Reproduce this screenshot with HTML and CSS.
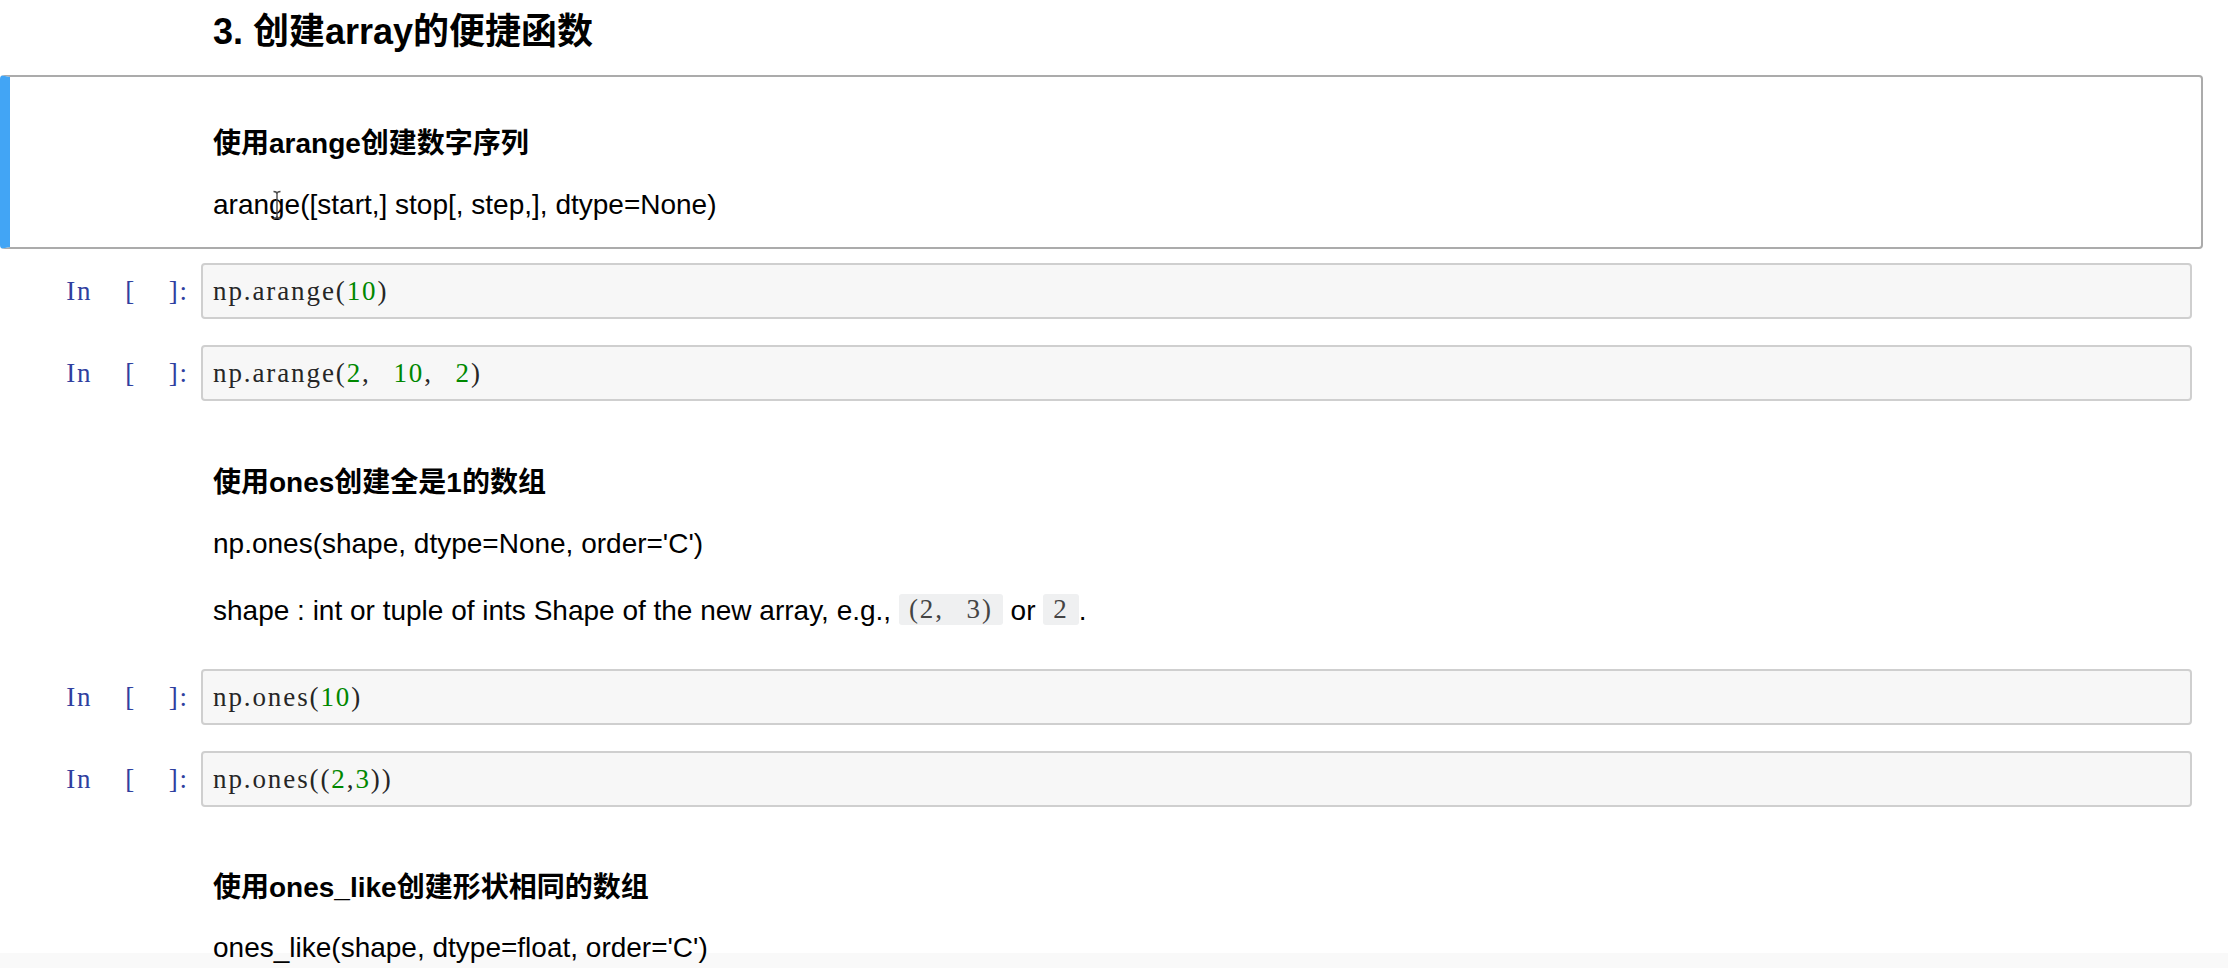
FILE: index.html
```html
<!DOCTYPE html>
<html lang="zh-CN">
<head>
<meta charset="utf-8">
<title>Notebook</title>
<link rel="stylesheet" href="styles.css">
</head>
<body>
<div class="notebook">

  <div class="cell text-cell cell-head">
    <div class="prompt"></div>
    <div class="rendered">
      <h3 class="h3">3. 创建array的便捷函数</h3>
    </div>
  </div>

  <div class="cell text-cell selected cell-md1">
    <div class="prompt"></div>
    <div class="rendered">
      <h4 class="h4">使用arange创建数字序列</h4>
      <p class="para gap21">arange([start,] stop[, step,], dtype=None)</p>
    </div>
    <svg class="ibeam" width="10" height="30" viewBox="0 0 10 30" aria-hidden="true">
      <path d="M1.5 1.5 Q5 1.5 5 4 Q5 1.5 8.5 1.5 M5 4 V26 M1.5 28.5 Q5 28.5 5 26 Q5 28.5 8.5 28.5" fill="none" stroke="#4a4a4a" stroke-width="1.4"/>
    </svg>
  </div>

  <div class="cell code-cell">
    <div class="prompt"><span class="ptext">In [ ]:</span></div>
    <div class="input-box"><span class="code">np.arange(<span class="num">10</span>)</span></div>
  </div>

  <div class="cell code-cell">
    <div class="prompt"><span class="ptext">In [ ]:</span></div>
    <div class="input-box"><span class="code">np.arange(<span class="num">2</span>, <span class="num">10</span>, <span class="num">2</span>)</span></div>
  </div>

  <div class="cell text-cell cell-md2">
    <div class="prompt"></div>
    <div class="rendered">
      <h4 class="h4">使用ones创建全是1的数组</h4>
      <p class="para gap21">np.ones(shape, dtype=None, order='C')</p>
      <p class="para gap27">shape : int or tuple of ints Shape of the new array, e.g., <code class="icode">(2, 3)</code> or <code class="icode">2</code>.</p>
    </div>
  </div>

  <div class="cell code-cell">
    <div class="prompt"><span class="ptext">In [ ]:</span></div>
    <div class="input-box"><span class="code">np.ones(<span class="num">10</span>)</span></div>
  </div>

  <div class="cell code-cell">
    <div class="prompt"><span class="ptext">In [ ]:</span></div>
    <div class="input-box"><span class="code">np.ones((<span class="num">2</span>,<span class="num">3</span>))</span></div>
  </div>

  <div class="cell text-cell cell-md3">
    <div class="prompt"></div>
    <div class="rendered">
      <h4 class="h4">使用ones_like创建形状相同的数组</h4>
      <p class="para gap20">ones_like(shape, dtype=float, order='C')</p>
    </div>
  </div>

</div>
<div class="bottom-shade"></div>
</body>
</html>
```

FILE: styles.css
```css
html, body {
  margin: 0;
  padding: 0;
  background: #ffffff;
  overflow: hidden;
}

body {
  font-family: "Liberation Sans", "Noto Sans CJK SC", sans-serif;
  color: #000000;
  height: 968px;
}

.notebook {
  width: 2203px;
}

.cell {
  position: relative;
  display: flex;
  align-items: flex-start;
  border: 2px solid transparent;
  border-radius: 4px;
  padding: 0 9px 0 10px;
  box-sizing: border-box;
}

.prompt {
  flex: none;
  width: 189px;
  box-sizing: border-box;
  text-align: right;
  padding-right: 12px;
}

.rendered {
  flex: 1;
  padding-left: 12px;
}

/* heading cell */
.cell-head {
  padding-top: 8px;
  padding-bottom: 19px;
}

.h3 {
  margin: 0;
  font-size: 36px;
  line-height: 44px;
  font-weight: bold;
}

.h4 {
  margin: 0;
  font-size: 28px;
  line-height: 40px;
  font-weight: bold;
}

.para {
  margin: 0;
  font-size: 28px;
  line-height: 40px;
}

.gap20 { margin-top: 20px; }
.gap21 { margin-top: 21px; }
.gap27 { margin-top: 27px; }

/* selected markdown cell */
.selected {
  border-color: #ababab;
  border-left: 10px solid #42a5f5;
  padding-left: 2px;
  border-radius: 4px;
}

.cell-md1 {
  padding-top: 47px;
  padding-bottom: 22px;
}

.cell-md2 {
  padding-top: 48px;
  padding-bottom: 22px;
}

.cell-md3 {
  padding-top: 47px;
  padding-bottom: 0;
}

.ibeam {
  position: absolute;
  left: 262px;
  top: 113px;
}

/* code cells */
.code-cell {
  padding-top: 12px;
  padding-bottom: 10px;
}

.code-cell .prompt {
  height: 56px;
  line-height: 56px;
}

.ptext {
  font-family: "Liberation Serif", serif;
  font-size: 27px;
  color: #303f9f;
  letter-spacing: 1.9px;
  word-spacing: 24px;
  white-space: pre;
}

.input-box {
  flex: 1;
  height: 56px;
  box-sizing: border-box;
  background: #f7f7f7;
  border: 2px solid #cfcfcf;
  border-radius: 4px;
  padding: 0 10px;
  line-height: 52px;
}

.code {
  font-family: "Liberation Serif", serif;
  font-size: 27px;
  color: #262626;
  letter-spacing: 1.9px;
  word-spacing: 14px;
  white-space: pre;
}

.num {
  color: #008800;
}

.icode {
  display: inline-block;
  font-family: "Liberation Serif", serif;
  font-size: 27px;
  line-height: 31px;
  color: #444444;
  background: #eff0f1;
  border-radius: 3px;
  padding: 0 10px;
  letter-spacing: 1.9px;
  word-spacing: 14px;
  white-space: pre;
  vertical-align: 2px;
}

.bottom-shade {
  position: fixed;
  left: 0;
  right: 0;
  bottom: 0;
  height: 15px;
  background: rgba(0, 0, 0, 0.022);
}
```
